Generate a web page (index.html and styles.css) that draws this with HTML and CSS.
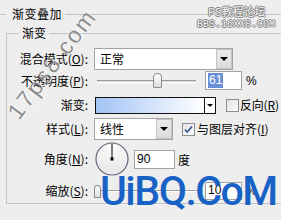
FILE: index.html
```html
<!DOCTYPE html>
<html lang="zh">
<head>
<meta charset="utf-8">
<title>渐变叠加</title>
<link rel="stylesheet" href="styles.css">
</head>
<body>
<fieldset class="outer">
  <legend class="outer-title">渐变叠加</legend>
  <fieldset class="inner">
    <legend class="inner-title">渐变</legend>

    <div class="row r1">
      <span class="lbl">混合模式(<u>O</u>):</span>
      <div class="select sel-blend">
        <span class="sel-text">正常</span>
        <span class="sel-btn"><i class="tri"></i></span>
      </div>
    </div>

    <div class="row r2">
      <span class="lbl">不透明度(<u>P</u>):</span>
      <div class="slider s-op">
        <div class="track"></div>
        <div class="thumb"></div>
      </div>
      <div class="num num-op"><span class="hl">61</span></div>
      <span class="unit">%</span>
    </div>

    <div class="row r3">
      <span class="lbl">渐变:</span>
      <div class="grad">
        <div class="grad-bar"></div>
        <div class="grad-btn"><i class="tri tri-s"></i></div>
      </div>
      <span class="chk chk-rev"></span>
      <span class="chk-lbl chk-lbl-rev">反向(<u>R</u>)</span>
    </div>

    <div class="row r4">
      <span class="lbl">样式(<u>L</u>):</span>
      <div class="select sel-style">
        <span class="sel-text">线性</span>
        <span class="sel-btn"><i class="tri"></i></span>
      </div>
      <span class="chk chk-align">
        <svg width="11" height="11" viewBox="0 0 11 11"><path d="M2 5.5 L4.3 8 L9 2.5" fill="none" stroke="#3a5a96" stroke-width="1.8"/></svg>
      </span>
      <span class="chk-lbl">与图层对齐(<u>I</u>)</span>
    </div>

    <div class="row r5">
      <span class="lbl">角度(<u>N</u>):</span>
      <svg class="dial" width="34" height="34" viewBox="0 0 34 34">
        <defs>
          <linearGradient id="dg" x1="0" y1="0" x2="0" y2="1">
            <stop offset="0" stop-color="#fbfbfb"/>
            <stop offset="1" stop-color="#e6e6e6"/>
          </linearGradient>
        </defs>
        <circle cx="17" cy="17" r="16" fill="url(#dg)" stroke="#5f6b7a" stroke-width="1.2"/>
        <line x1="17" y1="17" x2="17" y2="1.5" stroke="#000" stroke-width="1"/>
        <rect x="15.5" y="15.5" width="3" height="3" fill="#000"/>
      </svg>
      <div class="num num-ang">90</div>
      <span class="unit unit-deg">度</span>
    </div>

    <div class="row r6">
      <span class="lbl">缩放(<u>S</u>):</span>
      <div class="slider s-scale">
        <div class="track track-thin"></div>
        <div class="thumb thumb-s"></div>
      </div>
      <div class="num num-scale">10</div>
      <span class="unit">%</span>
    </div>
  </fieldset>
</fieldset>

<div class="wm-ps">PS教程论坛</div>
<div class="wm-bbs">BBS.16XX8.COM</div>
<div class="wm-17">17ps8.com</div>
<div class="wm-uibq">UiBQ.CoM</div>
</body>
</html>
```

FILE: styles.css
```css
* { box-sizing: border-box; }

html, body {
  margin: 0;
  padding: 0;
}

body {
  width: 281px;
  height: 220px;
  overflow: hidden;
  position: relative;
  background: #eeeeee;
  color: #000;
  font-family: "Noto Sans CJK SC", "Liberation Sans", sans-serif;
  font-size: 12px;
}

u { text-decoration: underline; text-underline-offset: 1px; }

.outer {
  margin: 6px 0 0 -10px;
  padding: 4px 0 0 15px;
  border: 1px solid #c4c4c4;
  width: 330px;
  height: 260px;
  min-width: 0;
}

.outer-title {
  padding: 0 3px 0 6px;
  height: 16px;
  line-height: 16px;
  font-size: 12px;
  letter-spacing: 0.5px;
}

.inner {
  margin: 0;
  padding: 8px 0 3px 12px;
  border: 1px solid #c4c4c4;
  width: 320px;
  min-width: 0;
}

.inner-title {
  padding: 0 3px;
  height: 14px;
  line-height: 14px;
}

.row {
  display: flex;
  align-items: center;
  white-space: nowrap;
}

.lbl {
  width: 69px;
  margin-right: 6px;
  text-align: right;
  line-height: 14px;
}

.r1 { height: 22px; }
.r2 { margin-top: 1px; height: 20px; }
.r3 { margin-top: 6px; height: 16px; }
.r4 { margin-top: 5px; height: 22px; }
.r5 { margin-top: 2px; height: 34px; }
.r6 { margin-top: 6px; height: 18px; }

/* select boxes */
.select {
  display: flex;
  height: 22px;
  border: 1px solid #a3a3a3;
  background: #fff;
}
.sel-blend { width: 139px; }
.sel-style { width: 79px; }

.sel-text {
  flex: 1;
  padding-left: 5px;
  line-height: 20px;
}

.sel-btn {
  width: 16px;
  display: flex;
  align-items: center;
  justify-content: center;
  background: linear-gradient(#ececec, #dcdcdc);
  border: 1px solid #c3c3c3;
}

.tri {
  display: block;
  width: 0;
  height: 0;
  border-left: 4px solid transparent;
  border-right: 4px solid transparent;
  border-top: 4px solid #000;
}
.tri-s {
  border-left-width: 3px;
  border-right-width: 3px;
  border-top-width: 3px;
}

/* sliders */
.slider {
  position: relative;
  display: flex;
  align-items: center;
}
.s-op { margin-left: 3px; width: 99px; height: 20px; }
.s-scale { margin-left: 0; width: 106px; height: 18px; }

.track {
  width: 100%;
  height: 3px;
  border-top: 1px solid #9d9d9d;
  border-bottom: 1px solid #ffffff;
  background: #d6d6d6;
}
.track-thin {
  height: 2px;
  border-bottom: 1px solid #fff;
  background: none;
}

.thumb {
  position: absolute;
  left: 56px;
  top: 2px;
  width: 9px;
  height: 15px;
  border: 1px solid #8a8a8a;
  border-radius: 4px 4px 1px 1px;
  background: linear-gradient(#ffffff, #dcdcdc);
}
.thumb-s {
  left: 0;
  top: 3px;
  width: 7px;
  height: 13px;
}

/* numeric inputs */
.num {
  border: 1px solid #a3a3a3;
  background: #fff;
  font-family: "Liberation Sans", sans-serif;
  font-size: 12px;
  line-height: 16px;
  padding-left: 2px;
  position: relative;
  z-index: 1;
}
.num-op { margin-left: 9px; width: 37px; height: 19px; align-self: flex-start; }
.num-ang { margin-left: 5px; width: 41px; height: 19px; }
.num-scale { margin-left: 5px; width: 37px; height: 18px; line-height: 15px; }

.hl {
  display: inline-block;
  background: #6a8fd8;
  color: #fff;
  padding: 0 1px;
  line-height: 15px;
}

.unit {
  margin-left: 4px;
  font-family: "Liberation Sans", sans-serif;
}
.unit-deg {
  margin-left: 3px;
  font-family: "Noto Sans CJK SC", sans-serif;
}

/* gradient picker */
.grad {
  margin-left: 1px;
  width: 121px;
  height: 17px;
  display: flex;
  border: 1px solid #111;
}
.grad-bar {
  flex: 1;
  background: linear-gradient(to right, #a2c3f5, #ffffff);
}
.grad-btn {
  width: 11px;
  display: flex;
  align-items: center;
  justify-content: center;
  border-left: 1px solid #111;
  background: #fff;
}

/* checkboxes */
.chk {
  width: 13px;
  height: 13px;
  border: 1px solid #8e8e8e;
  background: linear-gradient(135deg, #e4e4e4, #fafafa);
  display: flex;
  align-items: center;
  justify-content: center;
}
.chk-rev { margin-left: 10px; }
.chk-align { margin-left: 9px; }

.chk-lbl {
  margin-left: 2px;
  line-height: 14px;
}
.chk-lbl-rev { margin-left: 1px; letter-spacing: -0.2px; }

.dial {
  margin-left: 1px;
  display: block;
}

/* watermarks */
.wm-ps,
.wm-bbs {
  position: absolute;
  color: #f7f7f7;
  text-shadow: 1px 0 0 #7c7c7c, -1px 0 0 #7c7c7c, 0 1px 0 #7c7c7c, 0 -1px 0 #7c7c7c;
  white-space: nowrap;
}
.wm-ps {
  left: 208px;
  top: 4px;
  font-size: 11px;
  line-height: 14px;
}
.wm-bbs {
  left: 197px;
  top: 18px;
  font-family: "Liberation Mono", monospace;
  font-size: 10px;
  line-height: 14px;
}

.wm-17 {
  position: absolute;
  left: 52px;
  top: 64px;
  transform: translate(-50%, -50%) rotate(-53deg);
  font-family: "Liberation Sans", sans-serif;
  font-size: 23px;
  letter-spacing: 2px;
  line-height: 24px;
  color: rgba(95, 95, 95, 0.7);
  text-shadow: 1px 1px 0 rgba(255, 255, 255, 0.8);
  white-space: nowrap;
}

.wm-uibq {
  position: absolute;
  left: 100px;
  top: 171px;
  font-family: Roboto, "Liberation Sans", sans-serif;
  font-weight: 500;
  font-size: 41px;
  line-height: 40px;
  letter-spacing: -1.5px;
  color: #1862c6;
  white-space: nowrap;
  z-index: 2;
}
```
